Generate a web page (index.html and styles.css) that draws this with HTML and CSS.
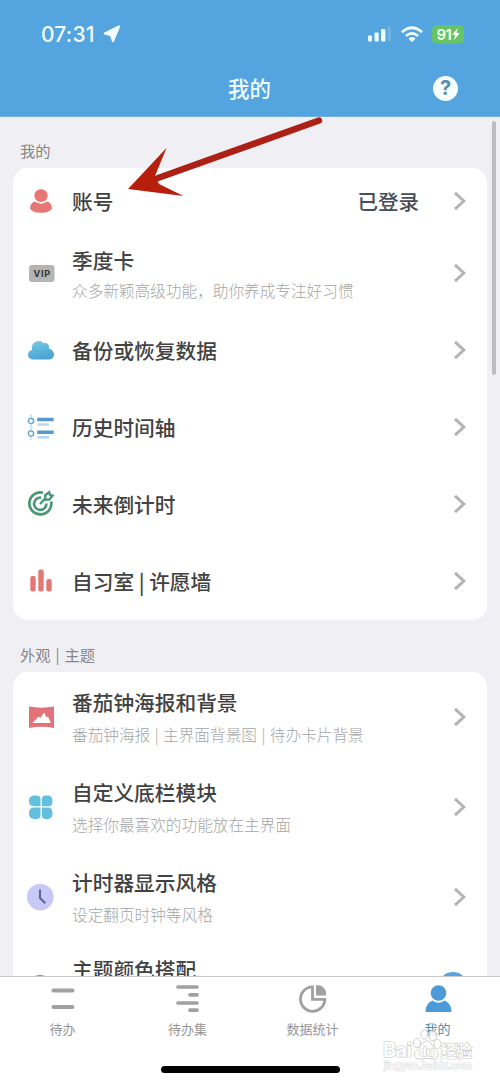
FILE: index.html
```html
<!DOCTYPE html>
<html lang="zh-CN">
<head>
<meta charset="utf-8">
<title>我的</title>
<link rel="stylesheet" href="styles.css">
</head>
<body>
<div class="phone">
  <header class="header">
    <div class="status">
      <span class="time">07:31</span>
      <svg class="locate" width="18" height="18" viewBox="0 0 18 18"><path d="M16 1.500 1.800 8.500l6.200 1.700 2 6Z" fill="#f4ffff" stroke="#f4ffff" stroke-width="2.200" stroke-linejoin="round"/></svg>
      <svg class="signal" width="26" height="18" viewBox="0 0 26 18"><g fill="#effdff"><rect x="1" y="10.500" width="4" height="6" rx="1"/><rect x="7.500" y="7.500" width="4.200" height="9" rx="1"/><rect x="14" y="4" width="4.400" height="12.500" rx="1"/></g><rect x="20.500" y="1" width="3.500" height="15.500" rx="1" fill="#70b4e5"/></svg>
      <svg class="wifi" width="22" height="17" viewBox="0 0 22 17"><g fill="none" stroke="#f0ffff" stroke-width="2.700"><path d="M1 6.300Q11-2.800 21 6.300"/><path d="M4.800 10.100Q11 4.500 17.200 10.100"/></g><path d="M7.500 12.400Q11 9.600 14.500 12.400L11.800 15.400Q11 16.200 10.200 15.400Z" fill="#f0ffff"/></svg>
      <span class="battery">91<svg width="8" height="12" viewBox="0 0 8 12"><path d="M5.700 0 .2 6.700h3L2 12l5.800-7H4.700Z" fill="#fff"/></svg></span>
    </div>
    <div class="navbar">
      <h1>我的</h1>
      <span class="help">?</span>
    </div>
  </header>

  <main class="content">
    <h2 class="section">我的</h2>
    <section class="card">
      <div class="row row-short">
        <svg class="icon" viewBox="0 0 28 28"><g fill="#e87674"><path d="M7.400 8.500C7.400.1 20.600.1 20.600 8.500 20.600 12.200 17.700 15 14 15s-6.600-2.800-6.600-6.500Z"/><path d="M8.200 14.200Q14 18.200 19.800 14.200C23 15.200 25 18 25 21.500 22.500 27.200 5.500 27.200 3 21.500 3 18 5 15.200 8.200 14.200Z"/></g><path d="M7.500 13.800Q14 18.600 20.500 13.800" fill="none" stroke="#fff" stroke-width=".9"/></svg>
        <div class="text"><b>账号</b></div><span class="value">已登录</span><svg class="chev" viewBox="0 0 14 20"><path d="m2 1.800 8.800 8.200L2 18.200"/></svg>
      </div>
      <div class="row">
        <svg class="icon" viewBox="0 0 28 28"><rect x="2" y="6" width="25.500" height="17" rx="3" fill="#b4b4b4"/><text x="15.200" y="17.900" class="vip">VIP</text></svg>
        <div class="text vip-text"><b>季度卡</b><small>众多新颖高级功能，助你养成专注好习惯</small></div><svg class="chev" viewBox="0 0 14 20"><path d="m2 1.800 8.800 8.200L2 18.200"/></svg>
      </div>
      <div class="row">
        <svg class="icon" viewBox="0 0 28 28"><defs><linearGradient id="sky" x1="0" y1="0" x2=".3" y2="1"><stop stop-color="#79cce2"/><stop offset="1" stop-color="#4ba5d4"/></linearGradient></defs><path d="M7 23.500C2.500 23.500 1 21 1 18.500 1 15.500 3 14.400 5 13.900 4.200 8.500 7.200 5 11.500 5 14 5 15 5.500 16.500 7.300 20.500 6.300 22.500 9 22 12.500 25 13.200 27 15.500 27 18.500 27 22 24.500 23.500 21.500 23.500Z" fill="url(#sky)"/></svg>
        <div class="text"><b>备份或恢复数据</b></div><svg class="chev" viewBox="0 0 14 20"><path d="m2 1.800 8.800 8.200L2 18.200"/></svg>
      </div>
      <div class="row">
        <svg class="icon" viewBox="0 0 28 28"><path d="M4 1V27" stroke="#a3cfe6"/><g fill="#fff" stroke="#63a2ca" stroke-width="1.400"><circle cx="4" cy="8" r="2.600"/><circle cx="4" cy="20.500" r="2.600"/></g><path d="M10.200 6.500h16.500M10.200 19.300h16.500" stroke="#5799cf" stroke-width="3.400"/><path d="M10.500 11.500H22M10.500 24.300H22" stroke="#b6d9ef" stroke-width="2.700"/></svg>
        <div class="text"><b>历史时间轴</b></div><svg class="chev" viewBox="0 0 14 20"><path d="m2 1.800 8.800 8.200L2 18.200"/></svg>
      </div>
      <div class="row">
        <svg class="icon" viewBox="0 0 28 28"><g fill="none" stroke="#4a9878" stroke-width="2.700"><path d="M16 2.700A11 11 0 1 0 24.200 11.500"/><path d="M14 7.600A6.200 6.200 0 1 0 19.400 13.500"/><path d="m13 14 6-6.500M18.200 5.200l4-3 .7 2.600 2.600.8-3.100 4-4 .2Z" stroke-width="2.400"/></g></svg>
        <div class="text"><b>未来倒计时</b></div><svg class="chev" viewBox="0 0 14 20"><path d="m2 1.800 8.800 8.200L2 18.200"/></svg>
      </div>
      <div class="row">
        <svg class="icon" viewBox="0 0 28 28"><g fill="#e27876"><rect x="3.300" y="9" width="5.400" height="15.500" rx="2"/><rect x="11.300" y="2.500" width="5.400" height="22" rx="2"/><rect x="19.300" y="12" width="5.400" height="12.500" rx="2"/></g></svg>
        <div class="text"><b>自习室 | 许愿墙</b></div><svg class="chev" viewBox="0 0 14 20"><path d="m2 1.800 8.800 8.200L2 18.200"/></svg>
      </div>
    </section>

    <h2 class="section section-next">外观 | 主题</h2>
    <section class="card">
      <div class="row row-tall">
        <svg class="icon" viewBox="0 0 28 28"><path d="M2 3.500Q14.500 5.800 27 3.500V25Q14.500 22.700 2 25Z" fill="#e27278"/><path d="m5.500 20 6-6.500 1.700 1.500 4-5.500 2.300 5 1.500-1L24 20Z" fill="#fff"/></svg>
        <div class="text"><b>番茄钟海报和背景</b><small class="piped">番茄钟海报 | 主界面背景图 | 待办卡片背景</small></div><svg class="chev" viewBox="0 0 14 20"><path d="m2 1.800 8.800 8.200L2 18.200"/></svg>
      </div>
      <div class="row row-tall">
        <svg class="icon" viewBox="0 0 28 28"><g fill="#62bfde"><path d="M7 2.500h2.500q4 0 4 4v6.700H7Q2 13.200 2 8T7 2.500Z"/><path d="M18.500 2.500h2.500q4.500 0 4.500 5.500t-4.500 5.200H14.900V6.500q0-4 3.600-4Z"/><path d="M7 14.600h6.500v7.400q0 4-4 4H7Q2 26 2 20.300T7 14.600Z"/><path d="M14.900 14.600H21q4.500 0 4.500 5.700T21 26h-2.500q-3.600 0-3.600-4Z"/></g></svg>
        <div class="text"><b>自定义底栏模块</b><small>选择你最喜欢的功能放在主界面</small></div><svg class="chev" viewBox="0 0 14 20"><path d="m2 1.800 8.800 8.200L2 18.200"/></svg>
      </div>
      <div class="row row-tall">
        <svg class="icon" viewBox="0 0 28 28"><circle cx="13.300" cy="14" r="13.300" fill="#c9c9f7"/><path d="M13 6.500V15l5.300 5.300" fill="none" stroke="#65669b" stroke-width="2.200"/></svg>
        <div class="text"><b>计时器显示风格</b><small>设定翻页时钟等风格</small></div><svg class="chev" viewBox="0 0 14 20"><path d="m2 1.800 8.800 8.200L2 18.200"/></svg>
      </div>
      <div class="row row-theme">
        <svg class="icon" viewBox="0 0 28 28"><circle cx="13" cy="18" r="12" fill="#a9817d"/></svg>
        <div class="text"><b>主题颜色搭配</b></div><span class="swatch"></span>
      </div>
    </section>
  </main>

  <nav class="tabs">
    <div class="tab"><svg viewBox="0 0 30 30"><path d="M5.500 6.500h19M5.500 23h19" stroke="#a0a0a0" stroke-width="4" stroke-linecap="round"/></svg><span>待办</span></div>
    <div class="tab"><svg viewBox="0 0 30 30"><path d="M5 3h19M17 10.800h7M5 19h19M17 26.200h7" stroke="#a0a0a0" stroke-width="3.700" stroke-linecap="round"/></svg><span>待办集</span></div>
    <div class="tab"><svg viewBox="0 0 30 30"><path d="M14.500 2.900A12.200 12.200 0 1 0 26.900 15.300H14.500Z" fill="none" stroke="#a0a0a0" stroke-width="2.800"/><path d="M18 1.200h3q5.500 1 7 7v3.300H18Z" fill="#a0a0a0"/></svg><span>数据统计</span></div>
    <div class="tab active"><svg viewBox="0 0 30 30"><g fill="#4c9bd9"><circle cx="15.500" cy="9" r="7.800"/><path d="M9.500 16.500Q15.500 21 21.500 16.500 28.500 19.500 28.500 28H2.500Q2.500 19.500 9.500 16.500Z"/></g></svg><span>我的</span></div>
  </nav>
  <div class="home"></div>

  <i class="scrollbar"></i>
  <svg class="arrow" width="210" height="90" viewBox="0 0 210 90"><path d="M198 10.500 37 68" stroke="#ad2015" stroke-width="6.500" stroke-linecap="round"/><path d="M7 79 45.500 38 34 66l4 8 24.500 12Z" fill="#b81e0c"/></svg>

  <div class="watermark">
    <svg width="100" height="46" viewBox="0 0 100 46">
      <g fill="#fff" fill-opacity=".85" stroke="#cfcfcf" stroke-width="1"><ellipse cx="40" cy="17" rx="3.600" ry="4.600"/><ellipse cx="47.500" cy="8.500" rx="3.600" ry="4.800"/><ellipse cx="56" cy="10" rx="3.600" ry="4.800"/><ellipse cx="60.500" cy="18" rx="3.600" ry="4.600"/><path d="M50 15C45 15 44 21 39.500 24 35 28 38 34 44 33Q50 31.500 55 33C62 34 63 27 58.500 24 55 21 55 15 50 15Z"/></g>
      <text class="wm-main" x="6" y="31" textLength="29">Bai</text>
      <text class="wm-du" x="42" y="30" textLength="15">du</text>
      <text class="wm-cn" x="64" y="30.500">经验</text>
      <text class="wm-url" x="7" y="43" textLength="88">jingyan.baidu.com</text>
    </svg>
  </div>
</div>
</body>
</html>
```

FILE: styles.css
```css
* { box-sizing: border-box; }
body { margin: 0; background: #fff; font-family: "Noto Sans CJK SC", sans-serif; }
.phone { position: relative; width: 500px; height: 1083px; overflow: hidden; display: flex; flex-direction: column; background: #f0f0f4; }

.header { height: 117px; flex: none; background: #54a4df; border-bottom: 1px solid #70afd6; }
.status { height: 59px; padding: 9px 36px 0 41px; display: flex; align-items: center; }
.time { width: 57px; font: 500 21px/1 Inter, sans-serif; letter-spacing: .2px; color: #f4ffff; white-space: nowrap; }
.locate { margin-left: 5px; flex: none; }
.signal { margin-left: auto; }
.wifi { margin: 0 9px 0 8px; }
.battery { width: 32px; height: 19px; border-radius: 5px; background: #65c466; color: #f5fff5; font: 600 15px/19px Inter, sans-serif; display: flex; align-items: center; justify-content: center; letter-spacing: -.4px; }
.navbar { height: 58px; display: grid; grid-template-columns: 1fr auto 1fr; align-items: center; padding: 0 42px 0 41px; }
.navbar h1 { grid-column: 2; margin: 0; font-size: 21.500px; font-weight: 500; line-height: 30px; color: #effbff; }
.help { justify-self: end; width: 25px; height: 25px; border-radius: 50%; background: #f8ffff; color: #568eae; font: 700 20px/25px Inter, sans-serif; text-align: center; }

.content { flex: 1; min-height: 0; overflow: hidden; padding: 22px 13px 0; }
.section { margin: 0 0 7px; padding-left: 7px; height: 22px; font-size: 15.300px; line-height: 22px; font-weight: 400; color: #86868a; }
.section-next { margin: 23px 0 7px; height: 22px; word-spacing: 1.500px; }
.card { background: #fff; border-radius: 15px; }
.row { height: 77px; padding: 0 20px 1px 14px; display: flex; align-items: center; }
.row-short { height: 67px; }
.row-tall { height: 90px; }
.row-theme { height: 82px; }
.icon { width: 28px; height: 28px; flex: none; }
.text { margin-left: 17px; padding-bottom: 1px; flex: 1; display: flex; flex-direction: column; white-space: nowrap; }
.text b { font-size: 20.700px; line-height: 30px; font-weight: 500; color: #424242; }
.text small { font-size: 15.650px; line-height: 23px; margin-top: 6px; font-weight: 300; color: #a6a6a6; }
.text .piped { word-spacing: 1px; }
.text.vip-text { padding-bottom: 0; }
.vip-text small { margin-top: 4px; }
.value { font-size: 20.500px; line-height: 30px; font-weight: 500; color: #474e56; margin-right: 34px; padding-bottom: 1px; }
.chev { width: 14px; height: 20px; flex: none; fill: none; stroke: #b4b4b4; stroke-width: 3; }
.vip { font: 700 9px Inter, sans-serif; text-anchor: middle; fill: #333; letter-spacing: .8px; }
.row-theme .text { padding-bottom: 27px; }
.swatch { width: 26px; height: 22px; border-radius: 50%; background: #54a4df; margin-right: 1px; }

.tabs { flex: none; height: 90px; border-top: 1px solid #c9c9cb; background: #fff; display: grid; grid-template-columns: repeat(4, 1fr); }
.tab { padding-top: 7px; display: flex; flex-direction: column; align-items: center; color: #969696; font-size: 13px; line-height: 18px; }
.tab svg { width: 30px; height: 30px; margin-bottom: 6px; }
.active { color: #4991aa; }
.home { flex: none; height: 17px; background: #fff; }
.home::before { content: ""; display: block; width: 179px; height: 7px; margin: 0 auto; border-radius: 4px; background: #000; }

.scrollbar { position: absolute; right: 4px; top: 121px; width: 4px; height: 254px; border-radius: 2px; background: #bdbdc0; }
.arrow { position: absolute; left: 121px; top: 110px; fill: none; }
.watermark { position: absolute; left: 377px; top: 1026px; }
.watermark text { fill: #fff; stroke: #c8c8c8; stroke-width: 1.200px; paint-order: stroke; }
.wm-main { font: 700 20px Inter, sans-serif; }
.watermark .wm-du { font: 700 12px Inter, sans-serif; }
.wm-cn { font: 700 15.500px "Noto Sans CJK SC", sans-serif; }
.watermark .wm-url { font: 400 10px Inter, sans-serif; stroke: #dedede; }
```
